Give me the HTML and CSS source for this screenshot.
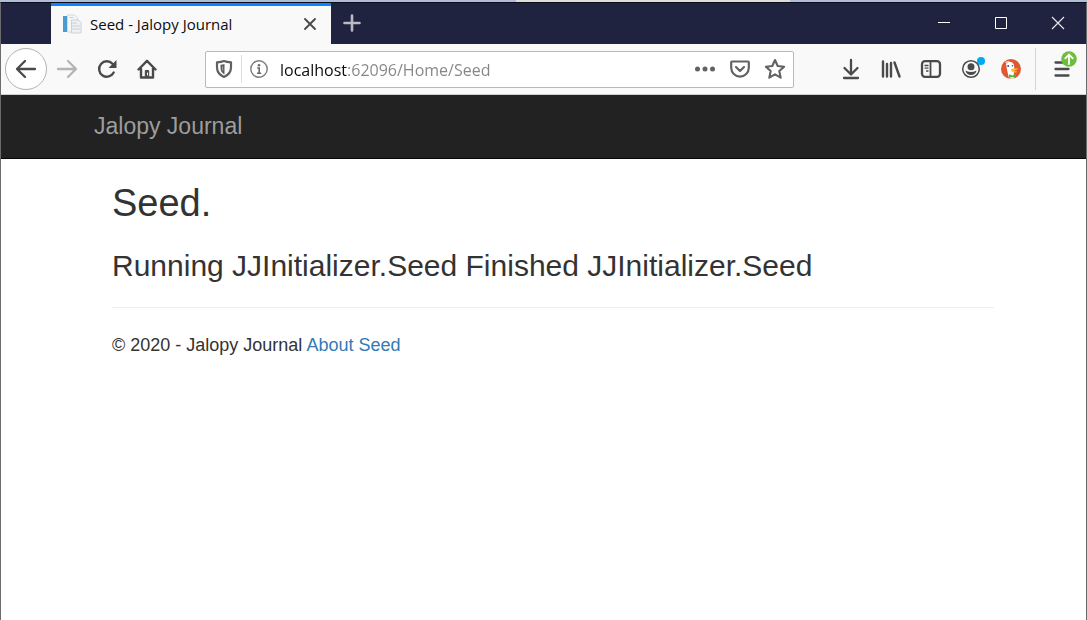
FILE: index.html
```html
<!DOCTYPE html>
<html lang="en">
<head>
<meta charset="utf-8">
<title>Seed - Jalopy Journal</title>
<link rel="stylesheet" href="styles.css">
</head>
<body>
<div class="desktop-strip"><span class="strip-light"></span></div>
<div class="window">
  <div class="titlebar">
    <div class="tab">
      <svg class="favicon" width="20" height="20" viewBox="0 0 20 20">
        <rect x="1" y="2" width="4" height="16" fill="#4a9bd0"/>
        <path d="M5.500 1h7l3 3V18h-10z" fill="#f4f6f8" stroke="#d3d8de"/>
        <path d="M9.500 6h7l2.500 2.500V19h-9.500z" fill="#eef1f4" stroke="#ccd2d9"/>
        <path d="M7.500 3.500h4M10 9h5M10 12h8M10 15h8" stroke="#ccd2d9"/>
      </svg>
      <span class="tab-title">Seed - Jalopy Journal</span>
      <button class="icon-button tab-close" aria-label="Close tab">
        <svg width="14" height="14" viewBox="0 0 14 14" fill="none" stroke="#4a4a4c" stroke-width="1.900" stroke-linecap="round"><path d="M2 2l10 10M12 2L2 12"/></svg>
      </button>
    </div>
    <button class="icon-button new-tab" aria-label="New tab">
      <svg width="18" height="18" viewBox="0 0 18 18" fill="none" stroke="#b9bac4" stroke-width="2.600" stroke-linecap="round"><path d="M9 1.500v15M1.500 9h15"/></svg>
    </button>
    <div class="window-controls">
      <button class="icon-button control" aria-label="Minimize"><svg width="14" height="14" viewBox="0 0 14 14"><path d="M1 6.500h12" stroke="#fff"/></svg></button>
      <button class="icon-button control" aria-label="Maximize"><svg width="14" height="14" viewBox="0 0 14 14"><path d="M1.500 1.500h11v11h-11z" fill="none" stroke="#fff"/></svg></button>
      <button class="icon-button control" aria-label="Close"><svg width="14" height="14" viewBox="0 0 14 14"><path d="M1 1l12 12M13 1L1 13" stroke="#e4e4ea" stroke-width="1.200"/></svg></button>
    </div>
  </div>

  <div class="toolbar">
    <div class="nav-buttons">
      <button class="icon-button back" aria-label="Back">
        <svg width="22" height="22" viewBox="0 0 22 22" fill="none" stroke="#4a4a4c" stroke-width="2.300" stroke-linecap="round" stroke-linejoin="round"><path d="M20 11H2M10 3l-8 8 8 8"/></svg>
      </button>
      <button class="icon-button tool" aria-label="Forward" disabled>
        <svg width="22" height="22" viewBox="0 0 22 22" fill="none" stroke="#b4b4b5" stroke-width="2.300" stroke-linecap="round" stroke-linejoin="round"><path d="M2 11h18M12 3l8 8-8 8"/></svg>
      </button>
      <button class="icon-button tool" aria-label="Reload">
        <svg width="20" height="20" viewBox="0 0 20 20"><path d="M16.700 13.500A7.700 7.700 0 1 1 15.500 4.800" fill="none" stroke="#4a4a4c" stroke-width="2.400" stroke-linecap="round"/><path d="M19.500 1v8h-8z" fill="#4a4a4c"/></svg>
      </button>
      <button class="icon-button tool" aria-label="Home">
        <svg width="20" height="20" viewBox="0 0 20 20" fill="none" stroke="#4a4a4c" stroke-width="2.400" stroke-linecap="round" stroke-linejoin="round"><path d="M1.500 10.500L10 1.800l8.500 8.700M4 9.500V18.500h12V9.500"/><path d="M8.300 18.500v-7h3.400v7" fill="#4a4a4c" stroke-width="1"/><path d="M10.500 14v2" stroke="#f9f9fa" stroke-width="1"/></svg>
      </button>
    </div>

    <div class="address-bar">
      <button class="icon-button shield" aria-label="Tracking protection">
        <svg width="18" height="20" viewBox="0 0 18 20"><path d="M9 2C6.500 3 4.500 3.200 2 3.400v4.800C2 13.500 4.500 16 9 18c4.500-2 7-4.500 7-9.800V3.400C13.500 3.200 11.500 3 9 2z" fill="none" stroke="#606062" stroke-width="2.200" stroke-linejoin="round"/><path d="M9.500 5C8 5.500 7 5.700 5.500 5.800v3.200c0 3 1.200 5 4 6.500z" fill="#606062"/><path d="M7.600 7.500v4" stroke="#a5a5a6"/></svg>
      </button>
      <button class="icon-button info" aria-label="Site information">
        <svg width="18" height="18" viewBox="0 0 18 18"><circle cx="9" cy="9" r="8.200" fill="none" stroke="#7c7c7e" stroke-width="1.400"/><circle cx="9" cy="5.200" r="1.300" fill="#6c6c6e"/><path d="M7.200 8h2v5M7 13.200h4.200" fill="none" stroke="#6c6c6e" stroke-width="1.600"/></svg>
      </button>
      <input class="url" type="text" aria-label="Address" value="localhost:62096/Home/Seed">
      <div class="page-actions">
        <button class="icon-button" aria-label="Page actions"><svg width="22" height="22" viewBox="0 0 22 22" fill="#626264"><circle cx="3.500" cy="11" r="2.500"/><circle cx="11" cy="11" r="2.500"/><circle cx="18.500" cy="11" r="2.500"/></svg></button>
        <button class="icon-button" aria-label="Save to Pocket"><svg width="22" height="22" viewBox="0 0 22 22" fill="none" stroke="#626264" stroke-width="2.200" stroke-linecap="round" stroke-linejoin="round"><path d="M3 3.500h16c.5 0 .8.300.8.800v5.500a8.800 8.800 0 0 1-17.600 0V4.300c0-.5.300-.8.800-.8z"/><path d="M7 9l4 4 4-4"/></svg></button>
        <button class="icon-button" aria-label="Bookmark"><svg width="22" height="22" viewBox="0 0 22 22" fill="none" stroke="#626264" stroke-width="2.100" stroke-linejoin="round"><path d="M11 2l2.700 6 6.400.7-4.800 4.400 1.400 6.500L11 16.300l-5.700 3.300 1.400-6.500L1.900 8.700 8.300 8z"/></svg></button>
      </div>
    </div>

    <div class="tools">
      <button class="icon-button tool" aria-label="Downloads"><svg width="20" height="22" viewBox="0 0 20 22" fill="none" stroke="#4a4a4c" stroke-width="2.300" stroke-linecap="round" stroke-linejoin="round"><path d="M10 2v14M3.500 10l6.500 6.500 6.500-6.500M3 20h14"/></svg></button>
      <button class="icon-button tool" aria-label="Library"><svg width="20" height="20" viewBox="0 0 20 20" fill="none" stroke="#4a4a4c" stroke-width="2.400" stroke-linecap="round"><path d="M2 2.500v15M6 5v12.500M10 4v13.500M13.500 3.500L18.500 17.500"/></svg></button>
      <button class="icon-button tool" aria-label="Sidebars"><svg width="22" height="20" viewBox="0 0 22 20" fill="none" stroke="#4a4a4c"><rect x="2" y="2.200" width="18" height="15.600" rx="3" stroke-width="2.300"/><path d="M10.500 2.500v15" stroke-width="1.800"/><path d="M4.500 6.500h4M4.500 9.200h4M6 12h2.500" stroke-width="1.300"/></svg></button>
      <button class="icon-button tool account" aria-label="Account"><svg width="20" height="20" viewBox="0 0 20 20"><circle cx="10" cy="10" r="8.300" fill="none" stroke="#4a4a4c" stroke-width="1.500"/><circle cx="10" cy="7.800" r="3.500" fill="#4a4a4c"/><path d="M4.500 11.800c1.600 0 2.200 1.300 5.500 1.300s3.900-1.300 5.500-1.300C15 14.500 13 16 10 16s-5-1.500-5.500-4.200z" fill="#4a4a4c"/></svg><span class="dot"></span></button>
      <button class="icon-button tool" aria-label="DuckDuckGo"><svg width="20" height="20" viewBox="0 0 20 20"><circle cx="10" cy="10" r="10" fill="#de5833"/><path d="M5 4.500C6 2 11 2 12.500 5c1 2 .6 4 .7 6l-.4 4.500.6 3.800c-2 .5-4 .4-5.400-.1C7 15 5.500 9 5 4.500z" fill="#fff"/><path d="M4 3.500c1-1.400 3-1.800 4.500-1.200L6 5z" fill="#e9c4b8"/><circle cx="7.200" cy="7" r="1" fill="#2d4f8e"/><circle cx="11.500" cy="6.700" r=".8" fill="#2d4f8e"/><path d="M10 10.500c1.500-1.800 4-.8 7-1-.7 1.500-3 1.800-4.500 2.200 1.500.8 3 .4 3.800 1-2 1.600-6.300 1-6.300-2.200z" fill="#fdc21c"/><path d="M8 15.300l3.300 1.200 3.200-1.200v3.800l-3.200-1.200L8 19z" fill="#4cba3c"/></svg></button>
      <button class="icon-button menu" aria-label="Open menu"><svg width="20" height="20" viewBox="0 0 20 20" stroke="#4a4a4c" stroke-width="2.300" stroke-linecap="round"><path d="M4.500 3.500h13M4.500 10h13M4.500 16.500h13"/></svg>
        <svg class="update" width="16" height="16" viewBox="0 0 16 16"><circle cx="8" cy="8" r="7.800" fill="#6ebe3b"/><path d="M8 13V4M4.300 7.300L8 3.500l3.700 3.800" fill="none" stroke="#fff" stroke-width="1.800" stroke-linecap="round"/></svg>
      </button>
    </div>
  </div>

  <header class="navbar"><a class="brand" href="#">Jalopy Journal</a></header>
  <main class="content">
    <h1 class="heading">Seed.</h1>
    <h2 class="subheading">Running JJInitializer.Seed Finished JJInitializer.Seed</h2>
    <hr class="rule">
    <footer class="footer">© 2020 - Jalopy Journal <a class="link" href="#">About Seed</a></footer>
  </main>
</div>
</body>
</html>
```
FILE: styles.css
```css
* { box-sizing: border-box; }
body {
  margin: 0;
  min-height: 100vh;
  display: flex;
  flex-direction: column;
  background: #fff;
  color: #333;
  font-family: "Liberation Sans", Arial, sans-serif;
}
.desktop-strip {
  height: 2px;
  background: #afbcda;
  display: flex;
  justify-content: center;
}
.strip-light { width: 274px; margin-left: 218px; background: #dcdddd; }
.window {
  flex: 1;
  border: 1px solid #6b6b6f;
  border-top-color: #0b0c18;
  border-bottom: 0;
}
.icon-button {
  display: flex;
  align-items: center;
  justify-content: center;
  flex: none;
  padding: 0;
  border: 0;
  background: none;
}
.icon-button svg { display: block; }
.titlebar {
  display: flex;
  height: 41px;
  padding-left: 50px;
  background: #202340;
}
.tab {
  display: flex;
  align-items: center;
  width: 280px;
  padding: 0 12px 2px 11px;
  border-top: 3px solid #0a84ff;
  background: #f9f9fa;
  color: #0c0c0d;
}
.tab-title {
  flex: 1;
  margin-left: 8px;
  font: 15px "Open Sans", "Noto Sans", sans-serif;
}
.tab-close { width: 18px; height: 18px; }
.new-tab { width: 42px; padding-bottom: 2px; }
.window-controls { display: flex; margin-left: auto; }
.control { width: 57px; padding-bottom: 1px; }
.toolbar {
  display: flex;
  align-items: center;
  height: 51px;
  border-bottom: 1px solid #cfcfd1;
  background: #f9f9fa;
}
.nav-buttons { display: flex; align-items: center; padding-left: 4px; }
.tool { position: relative; width: 40px; height: 40px; }
.back {
  width: 42px;
  height: 42px;
  border: 1px solid #b4b4b6;
  border-radius: 50%;
  background: #fff;
}
.address-bar {
  display: flex;
  align-items: center;
  flex: 1;
  height: 37px;
  margin: 0 37px 0 38px;
  border: 1px solid #b9b9bb;
  border-radius: 2px;
  background: #fff;
}
.shield { width: 36px; height: 28px; border-right: 1px solid #dcdcdd; }
.info { width: 34px; }
.url {
  flex: 1;
  min-width: 0;
  height: 32px;
  padding: 2px 0 0 4px;
  border: 0;
  outline: 0;
  font: 16px "Open Sans", "Noto Sans", sans-serif;
  color: transparent;
  background: linear-gradient(90deg, #0c0c0d 71px, #858587 71px);
  background-clip: text;
  -webkit-background-clip: text;
}
.page-actions { display: flex; gap: 13px; padding-right: 7px; }
.tools { display: flex; align-items: center; }
.dot {
  position: absolute;
  top: 8px;
  right: 6px;
  width: 8px;
  height: 8px;
  border-radius: 50%;
  background: #00a8f5;
}
.menu {
  position: relative;
  width: 51px;
  height: 42px;
  margin-left: 4px;
  border-left: 1px solid #d5d5d7;
}
.update { position: absolute; top: 3px; right: 9px; }
.navbar {
  display: flex;
  align-items: center;
  height: 64px;
  padding: 0 93px 1px;
  border-bottom: 1px solid #080808;
  background: #222;
}
.brand { color: #9d9d9d; font-size: 23px; text-decoration: none; }
.content { padding: 24px 92px 0 111px; }
.heading { margin: 0; font-size: 38px; line-height: 41px; font-weight: 400; }
.subheading { margin: 25px 0 0; font-size: 30px; line-height: 33px; font-weight: 400; }
.rule { margin: 25px 0; border: 0; border-top: 1px solid #eee; }
.footer { font-size: 18px; line-height: 25px; }
.link { color: #337ab7; text-decoration: none; }
```
